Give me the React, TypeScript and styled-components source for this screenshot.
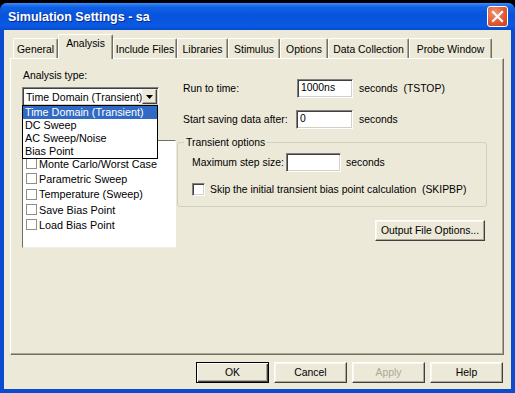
import React from "react";
import styled, { createGlobalStyle } from "styled-components";

const GlobalStyle = createGlobalStyle`
  html, body {
    margin: 0;
    padding: 0;
    background: #000;
  }
  body {
    width: 515px;
    height: 393px;
    overflow: hidden;
    font-family: "Liberation Sans", Arial, sans-serif;
    font-size: 10.4px;
    color: #000;
  }
  * {
    box-sizing: border-box;
  }
`;

const tabs = [
  { label: "General", width: 45 },
  { label: "Analysis", width: 55 },
  { label: "Include Files", width: 64 },
  { label: "Libraries", width: 51 },
  { label: "Stimulus", width: 52 },
  { label: "Options", width: 48 },
  { label: "Data Collection", width: 81 },
  { label: "Probe Window", width: 83 },
];

const analysisTypes = [
  "Time Domain (Transient)",
  "DC Sweep",
  "AC Sweep/Noise",
  "Bias Point",
];

// first entry of the list sits under the open drop-down
const optionItems = [
  "Monte Carlo/Worst Case",
  "Parametric Sweep",
  "Temperature (Sweep)",
  "Save Bias Point",
  "Load Bias Point",
];

const App = () => {
  return (
    <>
      <GlobalStyle />
      <Window>
        <TitleBar>
          <Title>Simulation Settings - sa</Title>
          <CloseButton>
            <svg width="13" height="13" viewBox="0 0 13 13">
              <path
                d="M2 2 L11 11 M11 2 L2 11"
                stroke="#fff"
                strokeWidth="2.2"
                strokeLinecap="square"
              />
            </svg>
          </CloseButton>
        </TitleBar>
        <Body>
          <TabStrip>
            {tabs.map((t) => (
              <Tab key={t.label} $width={t.width} $active={t.label === "Analysis"}>
                {t.label}
              </Tab>
            ))}
          </TabStrip>
          <TabPanel>
            <LeftColumn>
              <FieldCaption>Analysis type:</FieldCaption>
              <ComboWrap>
                <Combo>
                  <ComboText>Time Domain (Transient)</ComboText>
                  <ComboButton>
                    <svg width="7" height="4" viewBox="0 0 7 4">
                      <path d="M0 0 H7 L3.5 4 Z" fill="#000" />
                    </svg>
                  </ComboButton>
                </Combo>
                <DropList>
                  {analysisTypes.map((a, i) => (
                    <DropItem key={a} $selected={i === 0}>
                      {a}
                    </DropItem>
                  ))}
                </DropList>
              </ComboWrap>
              <OptionsList>
                {optionItems.map((o) => (
                  <OptionRow key={o}>
                    <FlatCheck />
                    {o}
                  </OptionRow>
                ))}
              </OptionsList>
            </LeftColumn>
            <RightColumn>
              <FieldRow>
                <RowLabel $width={114}>Run to time:</RowLabel>
                <TextBox $width={56}>1000ns</TextBox>
                <Unit>seconds&nbsp;&nbsp;(TSTOP)</Unit>
              </FieldRow>
              <FieldRow $gap={12}>
                <RowLabel $width={113}>Start saving data after:</RowLabel>
                <TextBox $width={57}>0</TextBox>
                <Unit>seconds</Unit>
              </FieldRow>
              <GroupBox>
                <Legend>Transient options</Legend>
                <FieldRow>
                  <RowLabel $width={94}>Maximum step size:</RowLabel>
                  <TextBox $width={55} />
                  <Unit $gap={5}>seconds</Unit>
                </FieldRow>
                <CheckRow>
                  <SunkenCheck />
                  <span>
                    Skip the initial transient bias point calculation&nbsp;&nbsp;(SKIPBP)
                  </span>
                </CheckRow>
              </GroupBox>
              <OutputButton>Output File Options...</OutputButton>
            </RightColumn>
          </TabPanel>
          <Footer>
            <DialogButton $default>OK</DialogButton>
            <DialogButton>Cancel</DialogButton>
            <DialogButton $disabled>Apply</DialogButton>
            <DialogButton>Help</DialogButton>
          </Footer>
        </Body>
      </Window>
    </>
  );
};

const Window = styled.div`
  margin-top: 3px;
  width: 515px;
  height: 390px;
  display: flex;
  flex-direction: column;
  background: #0a4cd0;
  border-radius: 7px 7px 0 0;
  overflow: hidden;
`;

const TitleBar = styled.div`
  flex: none;
  height: 27px;
  display: flex;
  align-items: center;
  justify-content: space-between;
  padding: 0 7px 0 8px;
  background: linear-gradient(
    180deg,
    #3d8ef7 0%,
    #1162e6 14%,
    #0853dc 45%,
    #0a59e2 85%,
    #064bcc 100%
  );
`;

const Title = styled.div`
  font-family: "Liberation Sans", sans-serif;
  font-weight: bold;
  font-size: 12.5px;
  color: #fff;
  text-shadow: 1px 1px 0 #0b2a8a;
`;

const CloseButton = styled.div`
  width: 21px;
  height: 21px;
  display: flex;
  align-items: center;
  justify-content: center;
  border: 1px solid #fff;
  border-radius: 3px;
  background: radial-gradient(circle at 35% 30%, #f39276 0%, #e05a36 55%, #c8401c 100%);
`;

const Body = styled.div`
  flex: 1;
  margin: 0 4px 4px;
  padding: 4px 7px 0 6px;
  background: #ece9d8;
  display: flex;
  flex-direction: column;
`;

const TabStrip = styled.div`
  flex: none;
  height: 24px;
  display: flex;
  align-items: flex-end;
  padding-left: 3px;
`;

const Tab = styled.div<{ $active?: boolean; $width: number }>`
  position: relative;
  z-index: ${(p) => (p.$active ? 1 : 0)};
  width: ${(p) => p.$width}px;
  flex: none;
  height: ${(p) => (p.$active ? 25 : 20)}px;
  margin-bottom: ${(p) => (p.$active ? "-1px" : "0")};
  padding-top: ${(p) => (p.$active ? 3 : 5)}px;
  text-align: center;
  line-height: 12px;
  white-space: nowrap;
  background: #ece9d8;
  border-top: 1px solid #fff;
  border-left: 1px solid #fff;
  border-right: 1px solid #716f64;
  box-shadow: inset -1px 0 #aca899;
  border-radius: 2px 2px 0 0;
`;

const TabPanel = styled.div`
  flex: none;
  height: 297px;
  display: grid;
  grid-template-columns: 166px 1fr;
  border: 1px solid;
  border-color: #fff #716f64 #716f64 #fff;
  box-shadow: inset -1px -1px #aca899;
`;

const LeftColumn = styled.div`
  padding: 10px 0 0 11px;
  display: flex;
  flex-direction: column;
`;

const FieldCaption = styled.div`
  line-height: 13px;
  margin-bottom: 5px;
  padding-left: 1px;
`;

const ComboWrap = styled.div`
  position: relative;
  width: 137px;
`;

const Combo = styled.div`
  height: 19px;
  display: flex;
  align-items: center;
  justify-content: space-between;
  background: #fff;
  border: 1px solid;
  border-color: #808080 #fff #fff #808080;
  box-shadow: inset 1px 1px #404040, inset -1px -1px #d4d0c8;
`;

const ComboText = styled.span`
  padding-left: 3px;
  white-space: nowrap;
  font-size: 10.6px;
`;

const ComboButton = styled.div`
  width: 16px;
  height: 15px;
  margin-right: 1px;
  display: flex;
  align-items: center;
  justify-content: center;
  background: #ece9d8;
  border: 1px solid;
  border-color: #f1efe2 #404040 #404040 #f1efe2;
  box-shadow: inset -1px -1px #aca899;
`;

const DropList = styled.div`
  position: absolute;
  top: 18px;
  left: 0;
  width: 136px;
  z-index: 2;
  background: #fff;
  border: 1px solid #000;
`;

const DropItem = styled.div<{ $selected?: boolean }>`
  height: 13px;
  line-height: 13px;
  padding-left: 2px;
  white-space: nowrap;
  font-size: 10.8px;
  background: ${(p) => (p.$selected ? "#316ac5" : "transparent")};
  color: ${(p) => (p.$selected ? "#fff" : "#000")};
`;

const OptionsList = styled.div`
  margin-top: 34px;
  padding-top: 15px;
  width: 154px;
  height: 108px;
  background: #fff;
  border: 1px solid;
  border-color: #716f64 #fff #f1efe2 #716f64;
`;

const OptionRow = styled.div`
  height: 15.3px;
  display: flex;
  align-items: center;
  gap: 2px;
  padding-left: 3px;
  white-space: nowrap;
  font-size: 10.8px;
`;

const FlatCheck = styled.span`
  width: 11px;
  height: 11px;
  flex: none;
  background: #fff;
  border: 1px solid #8e8e8e;
`;

const RightColumn = styled.div`
  padding: 20px 16px 0 0;
  display: flex;
  flex-direction: column;
`;

const FieldRow = styled.div<{ $gap?: number }>`
  height: 19px;
  display: flex;
  align-items: center;
  margin-top: ${(p) => p.$gap ?? 0}px;
  padding-left: 6px;
  white-space: nowrap;
`;

const RowLabel = styled.span<{ $width: number }>`
  width: ${(p) => p.$width}px;
  flex: none;
`;

const TextBox = styled.div<{ $width: number }>`
  width: ${(p) => p.$width}px;
  height: 19px;
  flex: none;
  padding: 2px 0 0 3px;
  background: #fff;
  border: 1px solid;
  border-color: #808080 #fff #fff #808080;
  box-shadow: inset 1px 1px #404040, inset -1px -1px #d4d0c8;
`;

const Unit = styled.span<{ $gap?: number }>`
  margin-left: ${(p) => p.$gap ?? 6}px;
`;

const GroupBox = styled.fieldset`
  margin: 7px 0 0;
  padding: 4px 10px 10px 8px;
  min-width: 0;
  border: 1px solid #d0d0bf;
  border-radius: 3px;
`;

const Legend = styled.legend`
  margin-left: -2px;
  padding: 0 2px;
  line-height: 13px;
`;

const CheckRow = styled.div`
  margin-top: 11px;
  height: 13px;
  display: flex;
  align-items: center;
  gap: 5px;
  padding-left: 6px;
  white-space: nowrap;
`;

const SunkenCheck = styled.span`
  width: 13px;
  height: 13px;
  flex: none;
  background: #fff;
  border: 1px solid;
  border-color: #808080 #fff #fff #808080;
  box-shadow: inset 1px 1px #404040, inset -1px -1px #d4d0c8;
`;

const raised = `
  background: #ece9d8;
  border: 1px solid;
  border-color: #fff #404040 #404040 #fff;
  box-shadow: inset -1px -1px #aca899, inset 1px 1px #f8f7f1;
`;

const OutputButton = styled.div`
  ${raised}
  align-self: flex-end;
  margin: 13px 2px 0 0;
  width: 110px;
  height: 21px;
  display: flex;
  align-items: center;
  justify-content: center;
  white-space: nowrap;
`;

const Footer = styled.div`
  display: flex;
  justify-content: flex-end;
  gap: 5px;
  padding: 7px 1px 0 0;
`;

const DialogButton = styled.div<{ $default?: boolean; $disabled?: boolean }>`
  ${raised}
  width: 73px;
  height: 21px;
  display: flex;
  align-items: center;
  justify-content: center;
  color: ${(p) => (p.$disabled ? "#aca899" : "#000")};
  ${(p) =>
    p.$default &&
    `
    border-color: #000;
    box-shadow: inset 1px 1px #fff, inset -1px -1px #404040, inset -2px -2px #aca899;
  `}
`;

export default App;
